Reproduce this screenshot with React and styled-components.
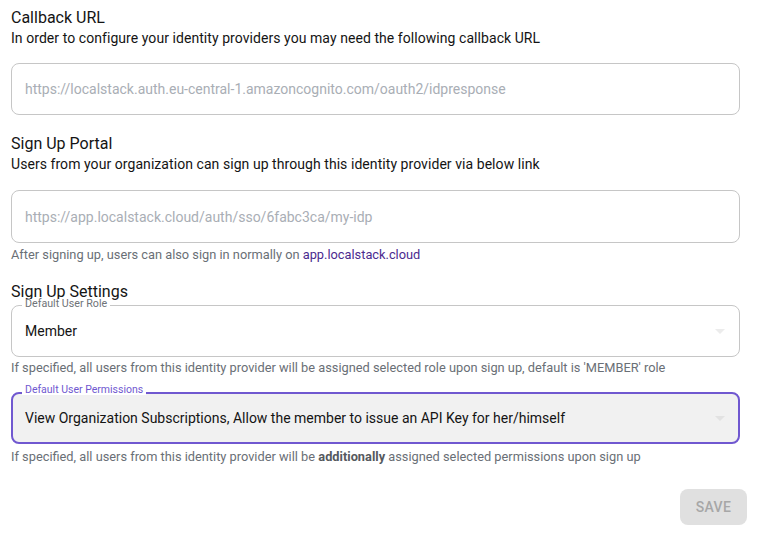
import React from "react";
import styled, { createGlobalStyle } from "styled-components";

const Global = createGlobalStyle`
  html, body { margin: 0; padding: 0; background: #fff; }
  body { font-family: Roboto, "Liberation Sans", Arial, sans-serif; color: #1a1a1a; }
  * { box-sizing: border-box; }
`;

const Page = styled.div`
  width: 767px;
  padding: 6px 20px 0 11px;
  display: flex;
  flex-direction: column;
`;

const Section = styled.section`
  display: flex;
  flex-direction: column;
  margin-right: 7px;
  margin-top: ${(p) => p.$gap || 0}px;
`;

const Title = styled.h2`
  margin: 0;
  font-size: 16px;
  font-weight: 400;
  line-height: 24px;
  color: #141414;
`;

const Subtitle = styled.p`
  margin: 0;
  font-size: 14px;
  line-height: 16px;
  letter-spacing: 0.06px;
  color: #141414;
`;

const Box = styled.div`
  position: relative;
  margin-top: ${(p) => p.$mt || 0}px;
  height: ${(p) => p.$h || 52}px;
  display: flex;
  align-items: center;
  padding: 0 ${(p) => (p.$focused ? 12 : 13)}px;
  border: ${(p) => (p.$focused ? "2px solid #7058d0" : "1px solid #c6c6c6")};
  border-radius: 8px;
  background: ${(p) => (p.$focused ? "#f1f1f1" : "#fff")};
`;

const Placeholder = styled.span`
  font-size: 14px;
  color: #a9aeb5;
`;

const Value = styled.span`
  flex: 1;
  font-size: 14px;
  color: #141414;
`;

const FloatLabel = styled.span`
  position: absolute;
  left: ${(p) => (p.$focused ? 9 : 10)}px;
  top: ${(p) => (p.$focused ? -9 : -7)}px;
  padding: 0 3px;
  background: #fff;
  font-size: ${(p) => (p.$focused ? 10.5 : 10.7)}px;
  line-height: 10px;
  color: ${(p) => (p.$focused ? "#7058d0" : "#6f7378")};
`;

const Caret = styled.svg`
  width: 10px;
  height: 5px;
  margin-right: 1px;
  flex: none;
`;

const Helper = styled.p`
  margin: ${(p) => p.$mt || 3}px 0 0;
  font-size: 12.8px;
  line-height: 16px;
  color: #6a6f76;
  b { font-weight: 700; color: #55595e; }
`;

const Link = styled.a`
  color: #4b2b8f;
  text-decoration: none;
`;

const Actions = styled.div`
  display: flex;
  justify-content: flex-end;
  margin-top: 24px;
`;

const SaveButton = styled.button`
  width: 67px;
  height: 36px;
  border: none;
  border-radius: 8px;
  background: #e0e0e0;
  color: #a7a7a7;
  font-family: inherit;
  font-size: 14px;
  font-weight: 500;
  letter-spacing: 0.4px;
  text-transform: uppercase;
`;

const DropCaret = ({ color }) => (
  <Caret viewBox="0 0 10 5">
    <path d="M0 0 L10 0 L5 5 Z" fill={color} />
  </Caret>
);

export default function App() {
  return (
    <>
      <Global />
      <Page>
        <Section>
          <Title>Callback URL</Title>
          <Subtitle>In order to configure your identity providers you may need the following callback URL</Subtitle>
          <Box $mt={17}>
            <Placeholder>https://localstack.auth.eu-central-1.amazoncognito.com/oauth2/idpresponse</Placeholder>
          </Box>
        </Section>

        <Section $gap={17}>
          <Title>Sign Up Portal</Title>
          <Subtitle>Users from your organization can sign up through this identity provider via below link</Subtitle>
          <Box $mt={18} $h={53}>
            <Placeholder>https://app.localstack.cloud/auth/sso/6fabc3ca/my-idp</Placeholder>
          </Box>
          <Helper $mt={4}>
            After signing up, users can also sign in normally on <Link href="#">app.localstack.cloud</Link>
          </Helper>
        </Section>

        <Section $gap={17}>
          <Title>Sign Up Settings</Title>
          <Box $mt={1}>
            <FloatLabel>Default User Role</FloatLabel>
            <Value>Member</Value>
            <DropCaret color="#ececec" />
          </Box>
          <Helper>If specified, all users from this identity provider will be assigned selected role upon sign up, default is 'MEMBER' role</Helper>
          <Box $mt={16} $focused>
            <FloatLabel $focused>Default User Permissions</FloatLabel>
            <Value>View Organization Subscriptions, Allow the member to issue an API Key for her/himself</Value>
            <DropCaret color="#e2e2e2" />
          </Box>
          <Helper $mt={5}>
            If specified, all users from this identity provider will be <b>additionally</b> assigned selected permissions upon sign up
          </Helper>
        </Section>

        <Actions>
          <SaveButton>Save</SaveButton>
        </Actions>
      </Page>
    </>
  );
}
